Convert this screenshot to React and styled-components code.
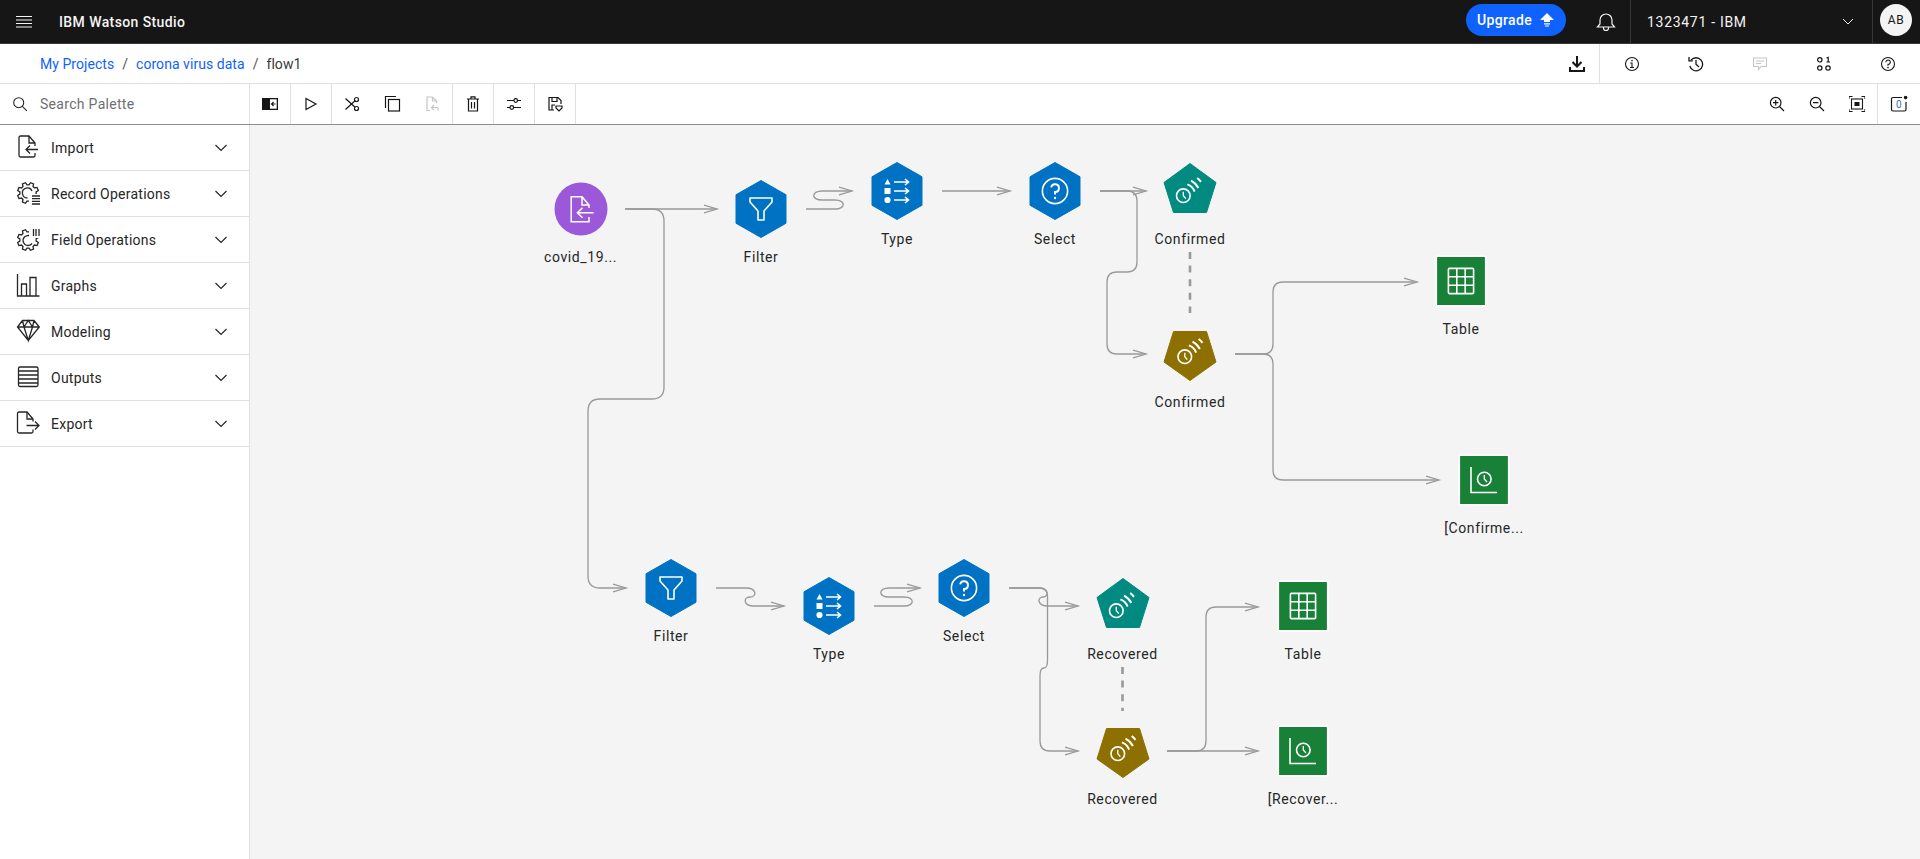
import React from 'react'
import styled, { createGlobalStyle } from 'styled-components'

const CANVAS_X = 250
const CANVAS_Y = 125
const FONT = `Roboto, "Noto Sans", sans-serif`

const GlobalStyle = createGlobalStyle`
  html, body { margin: 0; padding: 0; height: 100%; background: #fff; }
  body { font-family: ${FONT}; color: #161616; overflow: hidden; }
  * { box-sizing: border-box; }
`

const Page = styled.div`
  width: 1920px;
  height: 859px;
  display: flex;
  flex-direction: column;
  overflow: hidden;
`

/* ---------- header ---------- */
const Header = styled.header`
  height: 44px;
  flex: none;
  display: flex;
  align-items: stretch;
  background: #161616;
  border-bottom: 1px solid #393939;
  color: #f4f4f4;
`
const HeaderIcon = styled.div`
  width: 48px;
  display: flex;
  align-items: center;
  justify-content: center;
  flex: none;
`
const Brand = styled.div`
  margin-left: 11px;
  display: flex;
  align-items: center;
  font-size: 14px;
  font-weight: 500;
  letter-spacing: 0.4px;
  flex: 1;
`
const Upgrade = styled.button`
  align-self: flex-start;
  width: 100px;
  height: 32px;
  margin: 4px 16px 0 0;
  padding: 0 12px 0 11px;
  border: 0;
  border-radius: 16px;
  background: #0f62fe;
  color: #fff;
  display: flex;
  align-items: center;
  justify-content: space-between;
  font: 500 14px ${FONT};
  letter-spacing: 0.35px;
`
const Account = styled.div`
  width: 243px;
  padding: 0 18px 0 16px;
  display: flex;
  align-items: center;
  justify-content: space-between;
  border-left: 1px solid #393939;
  border-right: 1px solid #393939;
  font-size: 14px;
  letter-spacing: 0.7px;
`
const AvatarSlot = styled.div`
  width: 47px;
  flex: none;
  padding: 4px 0 0 7px;
`
const Avatar = styled.div`
  width: 32px;
  height: 32px;
  border-radius: 50%;
  background: #f4f4f4;
  color: #161616;
  display: flex;
  align-items: center;
  justify-content: center;
  font-size: 12px;
  letter-spacing: 0.5px;
`

/* ---------- breadcrumb row ---------- */
const SubBar = styled.div`
  height: 40px;
  flex: none;
  display: flex;
  align-items: stretch;
  border-bottom: 1px solid #e0e0e0;
`
const Crumbs = styled.nav`
  flex: 1;
  padding-left: 40px;
  display: flex;
  align-items: center;
  font-size: 14px;
  letter-spacing: 0.05px;
`
const Crumb = styled.a`
  color: ${p => (p.$current ? '#393939' : '#0f62fe')};
`
const CrumbSlash = styled.span`
  margin: 0 8px;
  color: #525252;
`
const DownloadButton = styled.div`
  width: 46px;
  display: flex;
  align-items: center;
  justify-content: center;
  border-right: 1px solid #e0e0e0;
  color: #161616;
`
const PanelButton = styled.div`
  width: 64px;
  display: flex;
  align-items: center;
  justify-content: center;
  color: ${p => (p.$disabled ? '#c6c6c6' : '#161616')};
`

/* ---------- toolbar row ---------- */
const ToolRow = styled.div`
  height: 41px;
  flex: none;
  display: flex;
  align-items: stretch;
  border-bottom: 1px solid #8d8d8d;
`
const Search = styled.div`
  width: 250px;
  flex: none;
  padding-left: 13px;
  display: flex;
  align-items: center;
  gap: 13px;
  border-right: 1px solid #e0e0e0;
  color: #6f6f6f;
  font-size: 14px;
  letter-spacing: 0.3px;
  svg { color: #262626; }
`
const ToolGroup = styled.div`
  display: flex;
  border-right: 1px solid #e0e0e0;
`
const Tool = styled.div`
  width: 40px;
  display: flex;
  align-items: center;
  justify-content: center;
  color: ${p => (p.$disabled ? '#c6c6c6' : '#161616')};
`
const ToolSpacer = styled.div`
  flex: 1;
`
const LastTool = styled(Tool)`
  width: 42px;
`

/* ---------- body ---------- */
const Body = styled.div`
  flex: 1;
  display: flex;
  min-height: 0;
`
const Palette = styled.aside`
  width: 250px;
  flex: none;
  background: #fff;
  border-right: 1px solid #e0e0e0;
`
const PaletteRow = styled.div`
  height: 46px;
  padding: 0 21px 0 16px;
  display: flex;
  align-items: center;
  gap: 9px;
  border-bottom: 1px solid #e0e0e0;
  font-size: 14px;
  letter-spacing: 0.25px;
  color: #262626;
`
const PaletteLabel = styled.span`
  flex: 1;
`
const Canvas = styled.main`
  position: relative;
  flex: 1;
  background: #f4f4f4;
`
const Edges = styled.svg`
  position: absolute;
  inset: 0;
  width: 100%;
  height: 100%;
  fill: none;
  stroke: #999;
  stroke-width: 1.3;
`
const Link = styled.path`
  stroke-dasharray: ${p => (p.$dashed ? '7 6.6' : 'none')};
  stroke-width: ${p => (p.$dashed ? 2.6 : 1.3)};
`
const NodeBox = styled.div`
  position: absolute;
  left: ${p => p.$x - CANVAS_X - 50}px;
  top: ${p => p.$y - CANVAS_Y - 30}px;
  width: 100px;
  display: flex;
  flex-direction: column;
  align-items: center;
  gap: 9px;
`
const NodeShape = styled.svg`
  width: 60px;
  height: 60px;
  overflow: visible;
  fill: none;
  stroke: #fff;
  stroke-width: 1.6;
`
const NodeLabel = styled.div`
  height: 18px;
  line-height: 18px;
  font-size: 14px;
  letter-spacing: 0.6px;
  color: #262626;
  white-space: nowrap;
`

/* ---------- icons ---------- */
const Glyph = styled.svg.attrs(p => ({ viewBox: `0 0 ${p.$w || 20} ${p.$h || p.$w || 20}` }))`
  width: ${p => p.$w || 20}px;
  height: ${p => p.$h || p.$w || 20}px;
  flex: none;
  fill: none;
  stroke: currentColor;
  stroke-width: ${p => p.$sw || 1.2};
`
const NoteDigit = styled.text`
  font: 10px ${FONT};
  fill: #3d70b2;
  stroke: none;
`

const gearPath = (cx, cy, rIn, rOut, teeth) => {
  const step = (Math.PI * 2) / teeth
  const pts = []
  for (let i = 0; i < teeth; i++) {
    const a = i * step - Math.PI / 8
    ;[[-0.34, rIn], [-0.2, rOut], [0.2, rOut], [0.34, rIn]].forEach(([k, r]) => {
      const t = a + k * step
      pts.push(`${(cx + r * Math.cos(t)).toFixed(2)} ${(cy + r * Math.sin(t)).toFixed(2)}`)
    })
  }
  return `M${pts.join(' L')} Z`
}

const Chevron = () => (
  <Glyph $w={14} $h={8} $sw={1.2}><path d="M1.5 1 L7 6.5 L12.5 1" /></Glyph>
)
const SmallChevron = () => (
  <Glyph $w={12} $h={7} $sw={1}><path d="M1 1 L6 6 L11 1" /></Glyph>
)

const ImportIcon = () => (
  <Glyph $w={26} $sw={1.3}>
    <path d="M19 11 V8 L13 1 H4.5 A1.5 1.5 0 0 0 3 2.5 V20.5 A1.5 1.5 0 0 0 4.5 22 H17.5 A1.5 1.5 0 0 0 19 20.5 V18" />
    <path d="M13 1 V8 H19 M22 14.5 H10 M14 10.5 L10 14.5 L14 18.5" />
  </Glyph>
)
const RecordIcon = () => (
  <Glyph $w={26} $sw={1.3}>
    <path d={gearPath(12, 12, 8.2, 10.6, 8)} />
    <path d="M16 10 A5 5 0 1 0 11.5 17" />
    <rect x="13" y="13" width="14" height="14" fill="#fff" stroke="none" />
    <path d="M16 15 H24 M16 17.7 H24 M16 20.3 H24 M16 23 H24" />
  </Glyph>
)
const FieldIcon = () => (
  <Glyph $w={26} $sw={1.3}>
    <path d={gearPath(12, 13, 8.2, 10.6, 8)} />
    <path d="M15 9.5 A5 5 0 1 0 16 16.5" />
    <rect x="13" y="0" width="13" height="11" fill="#fff" stroke="none" />
    <path d="M17.5 2 V9 M20 2 V9 M23 2 V9" />
  </Glyph>
)
const GraphsIcon = () => (
  <Glyph $w={26} $sw={1.3}>
    <path d="M1.5 1 V23 H23.5 M5.5 23 V11 H10.5 V23 M14 23 V4.5 H20 V23" />
  </Glyph>
)
const ModelIcon = () => (
  <Glyph $w={26} $sw={1.3}>
    <path d="M6.5 1.5 H18 L23.3 8 L12.3 21.5 L1.5 8 Z M1.5 8 H23.3 M6.5 1.5 L8 8 L12.3 21.5 L16.5 8 L18 1.5 M8 8 L12.3 1.5 L16.5 8" />
  </Glyph>
)
const OutputsIcon = () => (
  <Glyph $w={26} $sw={1.3}>
    <rect x="2.5" y="2" width="19.5" height="19.5" rx="1.5" />
    <path d="M2.5 6 H22 M2.5 10 H22 M2.5 14 H22 M2.5 18 H22" />
  </Glyph>
)
const ExportIcon = () => (
  <Glyph $w={26} $sw={1.3}>
    <path d="M17 10.5 V8 L11 1 H3 A1.5 1.5 0 0 0 1.5 2.5 V20.5 A1.5 1.5 0 0 0 3 22 H15.5 A1.5 1.5 0 0 0 17 20.5 V18.5" />
    <path d="M11 1 V8 H17 M10.5 14.5 H23 M19 10.5 L23 14.5 L19 18.5" />
  </Glyph>
)

const PALETTE = [
  ['Import', ImportIcon],
  ['Record Operations', RecordIcon],
  ['Field Operations', FieldIcon],
  ['Graphs', GraphsIcon],
  ['Modeling', ModelIcon],
  ['Outputs', OutputsIcon],
  ['Export', ExportIcon]
]

const Hamburger = () => (
  <Glyph $w={16} $h={12} $sw={1}><path d="M0 .5 H16 M0 4 H16 M0 7.5 H16 M0 11 H16" /></Glyph>
)
const UpArrow = () => (
  <Glyph $w={14} $h={14}>
    <path d="M7 0 L14 7 H10 V9 H4 V7 H0 Z" fill="currentColor" stroke="none" />
    <path d="M4 10.8 H10 M5 13 H9" strokeWidth="1.2" />
  </Glyph>
)
const Bell = () => (
  <Glyph $w={20} $sw={1.2}>
    <path d="M1.5 15 L4 12 V8 A6 6 0 0 1 16 8 V12 L18.5 15 Z" />
    <path d="M7.5 15 V16 A2.5 2.5 0 0 0 12.5 16 V15" />
  </Glyph>
)
const SearchIcon = () => (
  <Glyph $w={14} $sw={1.1}><circle cx="5.7" cy="5.7" r="5" /><path d="M9.4 9.4 L14 14" /></Glyph>
)
const Download = () => (
  <Glyph $w={16} $sw={2}>
    <path d="M8 0 V10 M3.5 6 L8 10.5 L12.5 6 M1 11 V15 H15 V11" />
  </Glyph>
)
const Info = () => (
  <Glyph $w={16} $sw={1.1}>
    <circle cx="8" cy="8" r="6.5" />
    <path d="M6.3 7 H8 V11.5 M6 11.5 H10" />
    <circle cx="8" cy="4.6" r=".8" fill="currentColor" stroke="none" />
  </Glyph>
)
const History = () => (
  <Glyph $w={16} $sw={1.3}>
    <path d="M3 4.2 A6.5 6.5 0 1 1 1.8 10" />
    <path d="M1 1 V4.8 H4.8 M8 4 V8.2 L11 11" />
  </Glyph>
)
const Comment = () => (
  <Glyph $w={16} $sw={1.1}>
    <path d="M1.5 2 H14.5 V10.5 H9 L6.5 13.5 V10.5 H1.5 Z M4 5 H12 M4 7.5 H9" />
  </Glyph>
)
const Operations = () => (
  <Glyph $w={16} $sw={1.2}>
    <circle cx="3.8" cy="3.8" r="2.2" />
    <circle cx="3.8" cy="12" r="2.2" />
    <circle cx="12" cy="12" r="2.2" />
    <path d="M10.5 2 L12.2 1.4 V6 M10.5 6 H14" />
  </Glyph>
)
const Help = () => (
  <Glyph $w={16} $sw={1.1}>
    <circle cx="8" cy="8" r="6.5" />
    <path d="M5.9 6.2 A2.2 2.2 0 1 1 8 8.4 V9.8" />
    <circle cx="8" cy="11.6" r=".8" fill="currentColor" stroke="none" />
  </Glyph>
)
const TogglePanel = () => (
  <Glyph $w={16} $h={12}>
    <rect x="0" y="0" width="16" height="12" fill="currentColor" stroke="none" />
    <rect x="8" y="1.3" width="6.7" height="9.4" fill="#fff" stroke="none" />
    <path d="M13.5 6 H10 M11.5 4 L9.6 6 L11.5 8" strokeWidth="1.2" />
  </Glyph>
)
const Play = () => (
  <Glyph $w={20}><path d="M5 4.5 V15.5 L15 10 Z" /></Glyph>
)
const Cut = () => (
  <Glyph $w={20}>
    <circle cx="14.5" cy="5.5" r="2" />
    <circle cx="14.5" cy="14.5" r="2" />
    <path d="M3.5 4.5 L12.8 13 M3.5 15.5 L12.8 7" />
  </Glyph>
)
const Copy = () => (
  <Glyph $w={20}>
    <path d="M3.5 14 V2.5 H14" />
    <rect x="6.5" y="5.5" width="11" height="11.5" />
  </Glyph>
)
const Paste = () => (
  <Glyph $w={20}>
    <path d="M14.5 7 L10.5 3 H5 V16.5 H8 M10.5 3 V7 H14.5 V9" />
    <path d="M16 13.5 H10 M12 11 L9.5 13.5 L12 16 M16 13.5 V16.5" />
  </Glyph>
)
const Trash = () => (
  <Glyph $w={20}>
    <path d="M4 5 H16 M8 5 V2.8 H12 V5 M5.5 5 V17 H14.5 V5 M8.5 8 V14.5 M11.5 8 V14.5" />
  </Glyph>
)
const Sliders = () => (
  <Glyph $w={20}>
    <path d="M3 6.5 H10 M13.5 6.5 H17 M3 13.5 H6 M9.5 13.5 H17" />
    <circle cx="11.7" cy="6.5" r="1.8" />
    <circle cx="7.8" cy="13.5" r="1.8" />
  </Glyph>
)
const Save = () => (
  <Glyph $w={20}>
    <path d="M9 16 H4 V3.5 H13 L16 6.5 V10" />
    <path d="M7 3.5 V7.5 H12 V3.5 M7 16 V11 H10" />
    <path d="M11 12 H17 V14 L14 17 L11 14 Z" />
  </Glyph>
)
const ZoomIn = () => (
  <Glyph $w={16} $sw={1.2}>
    <circle cx="6.7" cy="6.7" r="5.3" />
    <path d="M10.5 10.5 L15 15 M6.7 4 V9.4 M4 6.7 H9.4" />
  </Glyph>
)
const ZoomOut = () => (
  <Glyph $w={16} $sw={1.2}>
    <circle cx="6.7" cy="6.7" r="5.3" />
    <path d="M10.5 10.5 L15 15 M4 6.7 H9.4" />
  </Glyph>
)
const Fit = () => (
  <Glyph $w={16} $sw={1.1}>
    <path d="M0 3 V0.5 H3.5 M12.5 .5 H16 V3 M16 13 V15.5 H12.5 M3.5 15.5 H0 V13" />
    <rect x="2.5" y="3" width="11" height="10" />
    <rect x="5.5" y="6" width="5" height="4" fill="currentColor" stroke="none" />
  </Glyph>
)
const Notes = () => (
  <Glyph $w={18} $sw={1.2}>
    <path d="M12 2.5 H3 A1.5 1.5 0 0 0 1.5 4 V14.5 A1.5 1.5 0 0 0 3 16 H14.5 A1.5 1.5 0 0 0 16 14.5 V7" />
    <circle cx="15.6" cy="2.6" r="1.8" fill="currentColor" stroke="none" />
    <NoteDigit x="6" y="13">0</NoteDigit>
  </Glyph>
)

/* ---------- node shapes ---------- */
const HEX = '0,-28.5 25,-14.25 25,14.25 0,28.5 -25,14.25 -25,-14.25'
const SHAPES = {
  hex: <polygon points={HEX} fill="#0072c3" stroke="#0072c3" strokeWidth="1" strokeLinejoin="round" />,
  up: <polygon points="0,-27.5 26,-8.5 16.5,21.5 -16.5,21.5 -26,-8.5" fill="#008a80" stroke="#008a80" strokeWidth="1" strokeLinejoin="round" />,
  down: <polygon points="-16.5,-22.5 16.5,-22.5 26,8 0,26.5 -26,8" fill="#8e7000" stroke="#8e7000" strokeWidth="1" strokeLinejoin="round" />,
  square: <rect x="-24.7" y="-24.7" width="49.4" height="49.4" rx="1" fill="#198038" />,
  circle: <circle r="26.5" fill="#9b59d9" stroke="none" />
}

const Wireless = ({ x, y }) => (
  <g transform={`translate(${x} ${y})`}>
    <circle r="6.8" />
    <path d="M0 -4 V0 L2.5 3" strokeWidth="1.3" />
    <path d="M11.3 -4.1 A12 12 0 0 0 4.1 -11.3 M15.1 -7.7 A17 17 0 0 0 7.7 -15.1 M17.7 -13.9 A22.5 22.5 0 0 0 13.9 -17.7" strokeWidth="1.9" />
  </g>
)

const GLYPHS = {
  source: (
    <path d="M8 -1 V-4 L1 -12.3 H-9.8 V12.7 H8 V8 M1 -12.3 V-4 H8 M12.7 3.7 H-3.6 M1.5 -1.3 L-3.6 3.7 L1.5 8.7" strokeWidth="1.5" />
  ),
  filter: <path d="M-11 -11 H11 V-7 L3 2 V11 H-3 V2 L-11 -7 Z" strokeLinejoin="round" />,
  type: (
    <g>
      <polygon points="-9.5,-12 -6.5,-6.5 -12.5,-6.5" fill="#fff" stroke="none" />
      <rect x="-12.5" y="-3" width="6" height="6" fill="#fff" stroke="none" />
      <circle cx="-9.5" cy="9" r="3.1" fill="#fff" stroke="none" />
      <path d="M-3 -9 H11 M8 -12 L11.5 -9 L8 -6 M-3 0 H11 M8 -3 L11.5 0 L8 3 M-3 9 H11 M8 6 L11.5 9 L8 12" />
    </g>
  ),
  select: (
    <g>
      <circle r="12.6" />
      <path d="M-3.8 -3.6 A3.9 3.9 0 1 1 0 1 V3.6" strokeWidth="1.9" />
      <circle cy="7" r="1.2" fill="#fff" stroke="none" />
    </g>
  ),
  teal: <Wireless x={-6.7} y={4.7} />,
  brown: <Wireless x={-5.2} y={2.7} />,
  table: (
    <g>
      <rect x="-12.6" y="-12.6" width="25.2" height="25.2" rx="1" strokeWidth="1.6" />
      <path d="M-4.2 -12.6 V12.6 M4.2 -12.6 V12.6 M-12.6 -4.2 H12.6 M-12.6 4.2 H12.6" strokeWidth="1.6" />
    </g>
  ),
  chart: (
    <g>
      <path d="M-13 -13 V12.5 H13" />
      <circle cx="0.3" cy="-1" r="6.8" />
      <path d="M0.3 -5 V-1 L3 2" strokeWidth="1.3" />
    </g>
  )
}

const Node = ({ x, y, shape, icon, label }) => (
  <NodeBox $x={x} $y={y}>
    <NodeShape viewBox="-30 -30 60 60">
      {SHAPES[shape]}
      {GLYPHS[icon]}
    </NodeShape>
    <NodeLabel>{label}</NodeLabel>
  </NodeBox>
)

const NODES = [
  { x: 580.5, y: 209, shape: 'circle', icon: 'source', label: 'covid_19...' },
  { x: 761, y: 209, shape: 'hex', icon: 'filter', label: 'Filter' },
  { x: 897, y: 191, shape: 'hex', icon: 'type', label: 'Type' },
  { x: 1055, y: 191, shape: 'hex', icon: 'select', label: 'Select' },
  { x: 1190, y: 191, shape: 'up', icon: 'teal', label: 'Confirmed' },
  { x: 1190, y: 354, shape: 'down', icon: 'brown', label: 'Confirmed' },
  { x: 1461, y: 281, shape: 'square', icon: 'table', label: 'Table' },
  { x: 1484, y: 480, shape: 'square', icon: 'chart', label: '[Confirme...' },
  { x: 671, y: 588, shape: 'hex', icon: 'filter', label: 'Filter' },
  { x: 829, y: 606, shape: 'hex', icon: 'type', label: 'Type' },
  { x: 964, y: 588, shape: 'hex', icon: 'select', label: 'Select' },
  { x: 1122.5, y: 606, shape: 'up', icon: 'teal', label: 'Recovered' },
  { x: 1122.5, y: 751, shape: 'down', icon: 'brown', label: 'Recovered' },
  { x: 1303, y: 606, shape: 'square', icon: 'table', label: 'Table' },
  { x: 1303, y: 751, shape: 'square', icon: 'chart', label: '[Recover...' }
]

const LINKS = [
  'M625 209 H717',
  'M625 209 H652 Q664 209 664 221 V387 Q664 399 652 399 H600 Q588 399 588 411 V576 Q588 588 600 588 H626',
  'M806 209 H835 C846 209 846 200 835 200 H822 C811 200 811 191 822 191 H852',
  'M942 191 H1010',
  'M1100 191 H1146',
  'M1100 191 H1127 Q1137 191 1137 201 V262 Q1137 272 1127 272 H1117 Q1107 272 1107 282 V344 Q1107 354 1117 354 H1146',
  'M1235 354 H1263 Q1273 354 1273 344 V292 Q1273 282 1283 282 H1417',
  'M1235 354 H1263 Q1273 354 1273 364 V470 Q1273 480 1283 480 H1439',
  'M716 588 H746 C757 588 757 597 750 597 C743 597 743 606 754 606 H784',
  'M874 606 H904 C915 606 915 597 904 597 H889 C878 597 878 588 889 588 H920',
  'M1009 588 H1040 Q1047.5 588 1047.5 596 V660 Q1047.5 668 1044 668 Q1040 668 1040 676 V741 Q1040 751 1050 751 H1078',
  'M1009 588 H1038 C1049 588 1049 597 1043 597 C1037 597 1037 606 1048 606 H1078',
  'M1167 751 H1196 Q1206 751 1206 741 V617 Q1206 607 1216 607 H1258',
  'M1167 751 H1258'
]
const ARROWS = [
  [717, 209], [626, 588], [852, 191], [1010, 191], [1146, 191], [1146, 354], [1417, 282], [1439, 480],
  [784, 606], [920, 588], [1078, 751], [1078, 606], [1258, 607], [1258, 751]
]

const App = () => (
  <Page>
    <GlobalStyle />
    <Header>
      <HeaderIcon><Hamburger /></HeaderIcon>
      <Brand>IBM Watson Studio</Brand>
      <Upgrade>Upgrade <UpArrow /></Upgrade>
      <HeaderIcon><Bell /></HeaderIcon>
      <Account>
        <span>1323471 - IBM</span>
        <SmallChevron />
      </Account>
      <AvatarSlot><Avatar>AB</Avatar></AvatarSlot>
    </Header>

    <SubBar>
      <Crumbs>
        <Crumb>My Projects</Crumb>
        <CrumbSlash>/</CrumbSlash>
        <Crumb>corona virus data</Crumb>
        <CrumbSlash>/</CrumbSlash>
        <Crumb $current>flow1</Crumb>
      </Crumbs>
      <DownloadButton><Download /></DownloadButton>
      <PanelButton><Info /></PanelButton>
      <PanelButton><History /></PanelButton>
      <PanelButton $disabled><Comment /></PanelButton>
      <PanelButton><Operations /></PanelButton>
      <PanelButton><Help /></PanelButton>
    </SubBar>

    <ToolRow>
      <Search><SearchIcon />Search Palette</Search>
      <ToolGroup><Tool><TogglePanel /></Tool></ToolGroup>
      <ToolGroup><Tool><Play /></Tool></ToolGroup>
      <ToolGroup>
        <Tool><Cut /></Tool>
        <Tool><Copy /></Tool>
        <Tool $disabled><Paste /></Tool>
      </ToolGroup>
      <ToolGroup><Tool><Trash /></Tool></ToolGroup>
      <ToolGroup><Tool><Sliders /></Tool></ToolGroup>
      <ToolGroup><Tool><Save /></Tool></ToolGroup>
      <ToolSpacer />
      <ToolGroup>
        <Tool><ZoomIn /></Tool>
        <Tool><ZoomOut /></Tool>
        <Tool><Fit /></Tool>
      </ToolGroup>
      <LastTool><Notes /></LastTool>
    </ToolRow>

    <Body>
      <Palette>
        {PALETTE.map(([label, Icon]) => (
          <PaletteRow key={label}>
            <Icon />
            <PaletteLabel>{label}</PaletteLabel>
            <Chevron />
          </PaletteRow>
        ))}
      </Palette>
      <Canvas>
        <Edges viewBox={`${CANVAS_X} ${CANVAS_Y} 1670 734`}>
          {LINKS.map((d, i) => <Link key={i} d={d} />)}
          {ARROWS.map(([x, y], i) => (
            <path key={i} d={`M${x - 13} ${y - 3.8} L${x} ${y} L${x - 13} ${y + 3.8}`} />
          ))}
          <Link $dashed d="M1190 252 V313" />
          <Link $dashed d="M1122.5 667 V711" />
        </Edges>
        {NODES.map((n, i) => <Node key={i} {...n} />)}
      </Canvas>
    </Body>
  </Page>
)

export default App
